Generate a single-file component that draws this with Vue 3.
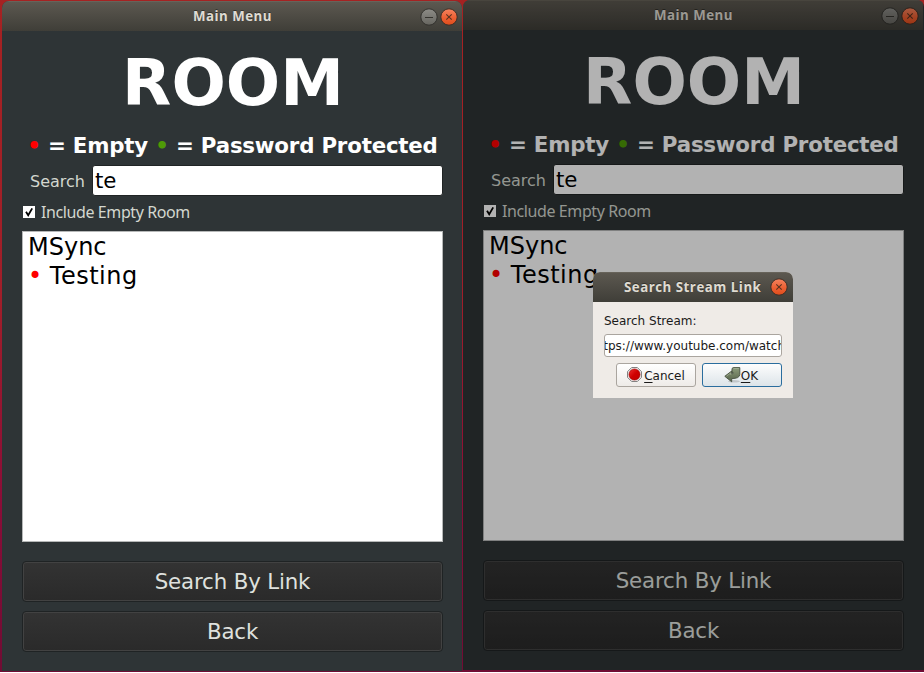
<script setup>
const windows = [
  { id: 'active', dimmed: false },
  { id: 'blocked', dimmed: true },
]
const rooms = [
  { name: 'MSync', empty: false },
  { name: 'Testing', empty: true },
]
</script>

<template>
  <main class="desktop">
    <section v-for="w in windows" :key="w.id" class="window" :class="w.id">
      <header class="titlebar">
        <span class="title"><span class="title-text">Main Menu</span></span>
        <svg class="control" viewBox="0 0 18 18">
          <circle cx="9" cy="9" r="8.2" fill="url(#minFill)" stroke="#33322e" />
          <path d="M5 9.5h8" stroke="#35342f" stroke-width="1.1" />
        </svg>
        <svg class="control" viewBox="0 0 18 18">
          <circle cx="9" cy="9" r="8.2" fill="url(#closeFill)" stroke="#3d2f27" />
          <path d="M6.300 6.300l5.400 5.400M11.700 6.300l-5.400 5.400" stroke="#5a3320" stroke-width="1.1" />
        </svg>
      </header>
      <div class="content">
        <h1 class="heading">ROOM</h1>
        <div class="legend"><span class="red">•</span> = Empty <span class="green">•</span> = Password Protected</div>
        <div class="search">
          <span class="search-label">Search</span>
          <div class="search-input">te</div>
        </div>
        <div class="option">
          <svg class="check" viewBox="0 0 12 12">
            <rect width="12" height="12" fill="#fff" />
            <path d="M3 5.8L5.2 9.3L9.2 2.4" fill="none" stroke="#000" stroke-width="1.8" />
          </svg>
          <span class="option-label">Include Empty Room</span>
        </div>
        <div class="list">
          <div v-for="r in rooms" :key="r.name" class="room" :class="{ empty: r.empty }"><template v-if="r.empty"><span class="red">•</span>&nbsp;</template>{{ r.name }}</div>
        </div>
        <div class="button">Search By Link</div>
        <div class="button">Back</div>
      </div>
      <div v-if="w.dimmed" class="shade"></div>
    </section>

    <section class="dialog">
      <header class="dialog-bar">
        <span class="dialog-title">Search Stream Link</span>
        <svg class="control" viewBox="0 0 18 18">
          <circle cx="9" cy="9" r="8.2" fill="url(#closeFill)" stroke="#3d2f27" />
          <path d="M6.300 6.300l5.400 5.400M11.700 6.300l-5.400 5.400" stroke="#5a3320" stroke-width="1.1" />
        </svg>
      </header>
      <div class="dialog-body">
        <div class="dialog-label">Search Stream:</div>
        <div class="dialog-input"><span class="link">https://www.youtube.com/watch</span></div>
        <div class="dialog-actions">
          <div class="action">
            <svg class="stop" viewBox="0 0 16 16">
              <path d="M5 .5h6L15.500 5v6L11 15.500H5L.5 11V5z" fill="#eee" stroke="#777" />
              <circle cx="8" cy="8" r="5.900" fill="url(#stopFill)" stroke="#a00000" stroke-width=".7" />
            </svg>
            <span class="action-text"><u>C</u>ancel</span>
          </div>
          <div class="action primary">
            <svg class="enter" viewBox="0 0 17 16">
              <ellipse cx="10" cy="14.300" rx="6" ry="1.300" fill="#000" opacity=".15" />
              <path d="M8 1.500L9.200 .6H15.800V7.500Q15.500 11.600 7.700 11.600V14.800L.8 9.300L7.700 4V7Q9.200 7 9.200 5.600H8z" fill="url(#enterFill)" stroke="#46503f" stroke-width=".9" stroke-linejoin="round" />
              <path d="M9.600 1.500h5.300M2.500 9.200l4.300-3.300V8" fill="none" stroke="#a9b59a" stroke-width=".7" />
            </svg>
            <span class="action-text"><u>O</u>K</span>
          </div>
        </div>
      </div>
    </section>

    <svg class="defs" width="0" height="0">
      <defs>
        <linearGradient id="minFill" x1="0" y1="0" x2="0" y2="1"><stop offset="0" stop-color="#8d8c87" /><stop offset="1" stop-color="#66655f" /></linearGradient>
        <linearGradient id="closeFill" x1="0" y1="0" x2="0" y2="1"><stop offset="0" stop-color="#f4835f" /><stop offset=".55" stop-color="#ec6033" /><stop offset="1" stop-color="#df4c1b" /></linearGradient>
        <linearGradient id="stopFill" x1="0" y1="0" x2="1" y2="1"><stop offset="0" stop-color="#ed3030" /><stop offset=".5" stop-color="#cf0000" /><stop offset="1" stop-color="#c00000" /></linearGradient>
        <linearGradient id="enterFill" x1="0" y1="0" x2="0" y2="1"><stop offset="0" stop-color="#8d9c7c" /><stop offset="1" stop-color="#56634a" /></linearGradient>
      </defs>
    </svg>
  </main>
</template>

<style>
body {
  margin: 0;
  background: #fff;
  overflow: hidden;
}
</style>

<style scoped>
.desktop {
  position: relative;
  width: 924px;
  height: 672px;
  overflow: hidden;
  background: linear-gradient(#a52222 0, #a01e2a 45%, #8a0d38 75%, #700c34 100%);
  font-family: "DejaVu Sans", sans-serif;
  white-space: nowrap;
}
.defs { position: absolute; }
.window {
  position: absolute;
  width: 460px;
  height: 670px;
  border-radius: 7px 7px 0 0;
  overflow: hidden;
  background: #2e3436;
}
.active { left: 2px; top: 1px; }
.blocked { left: 463px; top: 0; width: 461px; }
.shade {
  position: absolute;
  inset: 0;
  background: rgba(0, 0, 0, 0.3);
}
.titlebar {
  box-sizing: border-box;
  width: 460px;
  height: 30px;
  display: flex;
  align-items: center;
  gap: 2px;
  padding-right: 4px;
  background: linear-gradient(#5c5850, #3f3e38);
  border-top: 1px solid #67635a;
}
.title {
  flex: 1;
  padding: 0 0 1px 45px;
  text-align: center;
}
.title-text,
.dialog-title {
  font: bold 13.3px/20px "Open Sans", sans-serif;
  letter-spacing: 0.5px;
  color: #dfdbd2;
  text-shadow: 0 -1px #33322d;
}
.control {
  width: 18px;
  height: 18px;
  flex: none;
}
.content {
  width: 421px;
  padding: 0 20px;
  display: flex;
  flex-direction: column;
}
.heading {
  margin: 0;
  padding: 14px 0 0 1px;
  height: 86px;
  font-size: 64px;
  line-height: 76px;
  text-align: center;
  color: #fff;
}
.legend {
  height: 34px;
  line-height: 30px;
  font-size: 21.33px;
  letter-spacing: -0.2px;
  font-weight: bold;
  text-align: center;
  color: #fff;
}
.red { color: #f00; }
.green { color: #4e9a06; }
.search {
  display: flex;
  height: 31px;
  padding: 0 0 0 8px;
}
.search-label {
  width: 62px;
  font-size: 16px;
  line-height: 33px;
  color: #d3d7cf;
}
.search-input {
  box-sizing: border-box;
  flex: 1;
  height: 31px;
  padding-left: 2px;
  font-size: 21.33px;
  line-height: 30px;
  color: #000;
  background: #fff;
  border: 1px solid #202425;
  border-radius: 3px;
}
.option {
  display: flex;
  align-items: center;
  gap: 6px;
  height: 32px;
  margin-bottom: 3px;
  padding-left: 1px;
}
.check {
  width: 12px;
  height: 12px;
}
.option-label {
  font: 16px/30px "Noto Sans", sans-serif;
  letter-spacing: -0.4px;
  color: #d3d7cf;
}
.list {
  box-sizing: border-box;
  width: 421px;
  height: 311px;
  margin-bottom: 19px;
  padding: 1px 5px 0;
  font-size: 24px;
  line-height: 29px;
  color: #000;
  background: #fff;
  border: 1px solid #b6b8b8;
}
.empty {
  letter-spacing: 0.5px;
}
.empty .red {
  letter-spacing: -0.5px;
}
.button {
  box-sizing: border-box;
  height: 41px;
  margin-bottom: 9px;
  font-size: 21.33px;
  letter-spacing: -0.15px;
  line-height: 40px;
  text-align: center;
  color: #dfe1de;
  background: linear-gradient(#333, #2a2a2a);
  border: 1px solid #1f2324;
  border-radius: 4px;
  box-shadow: inset 0 0 0 1px #424242;
}
.dialog {
  position: absolute;
  left: 593px;
  top: 272px;
  width: 200px;
  height: 126px;
  border-radius: 7px 7px 0 0;
  overflow: hidden;
  background: #efebe7;
}
.dialog-bar {
  box-sizing: border-box;
  height: 30px;
  display: flex;
  align-items: center;
  justify-content: space-between;
  padding: 0 5px 1px 31px;
  background: linear-gradient(#5c5850, #3f3e38);
  border-top: 1px solid #67635a;
}
.dialog-body {
  padding: 9px 11px 0;
  font-size: 12px;
  color: #1a1a1a;
}
.dialog-label {
  height: 23px;
  line-height: 20px;
}
.dialog-input {
  box-sizing: border-box;
  height: 23px;
  display: flex;
  justify-content: flex-end;
  overflow: hidden;
  line-height: 22px;
  background: #fff;
  border: 1px solid #aaa59f;
  border-radius: 3px;
}
.link {
  margin-right: -4px;
}
.dialog-actions {
  display: flex;
  justify-content: flex-end;
  gap: 6px;
  padding-top: 6px;
}
.action {
  box-sizing: border-box;
  width: 80px;
  height: 24px;
  display: flex;
  align-items: center;
  justify-content: center;
  gap: 2px;
  line-height: 22px;
  background: linear-gradient(#fff, #eeebe8);
  border: 1px solid #aaa59f;
  border-radius: 3px;
}
.action-text {
  padding-top: 2px;
}
.action u {
  text-underline-offset: 2px;
}
.primary {
  gap: 0;
  padding-right: 2px;
  background: linear-gradient(#fdfdfd, #dce4e9);
  border-color: #2a6d9e;
}
.stop {
  width: 15px;
  height: 15px;
  margin-bottom: 1px;
}
.enter {
  width: 17px;
  height: 16px;
  margin-bottom: 1px;
}
</style>
